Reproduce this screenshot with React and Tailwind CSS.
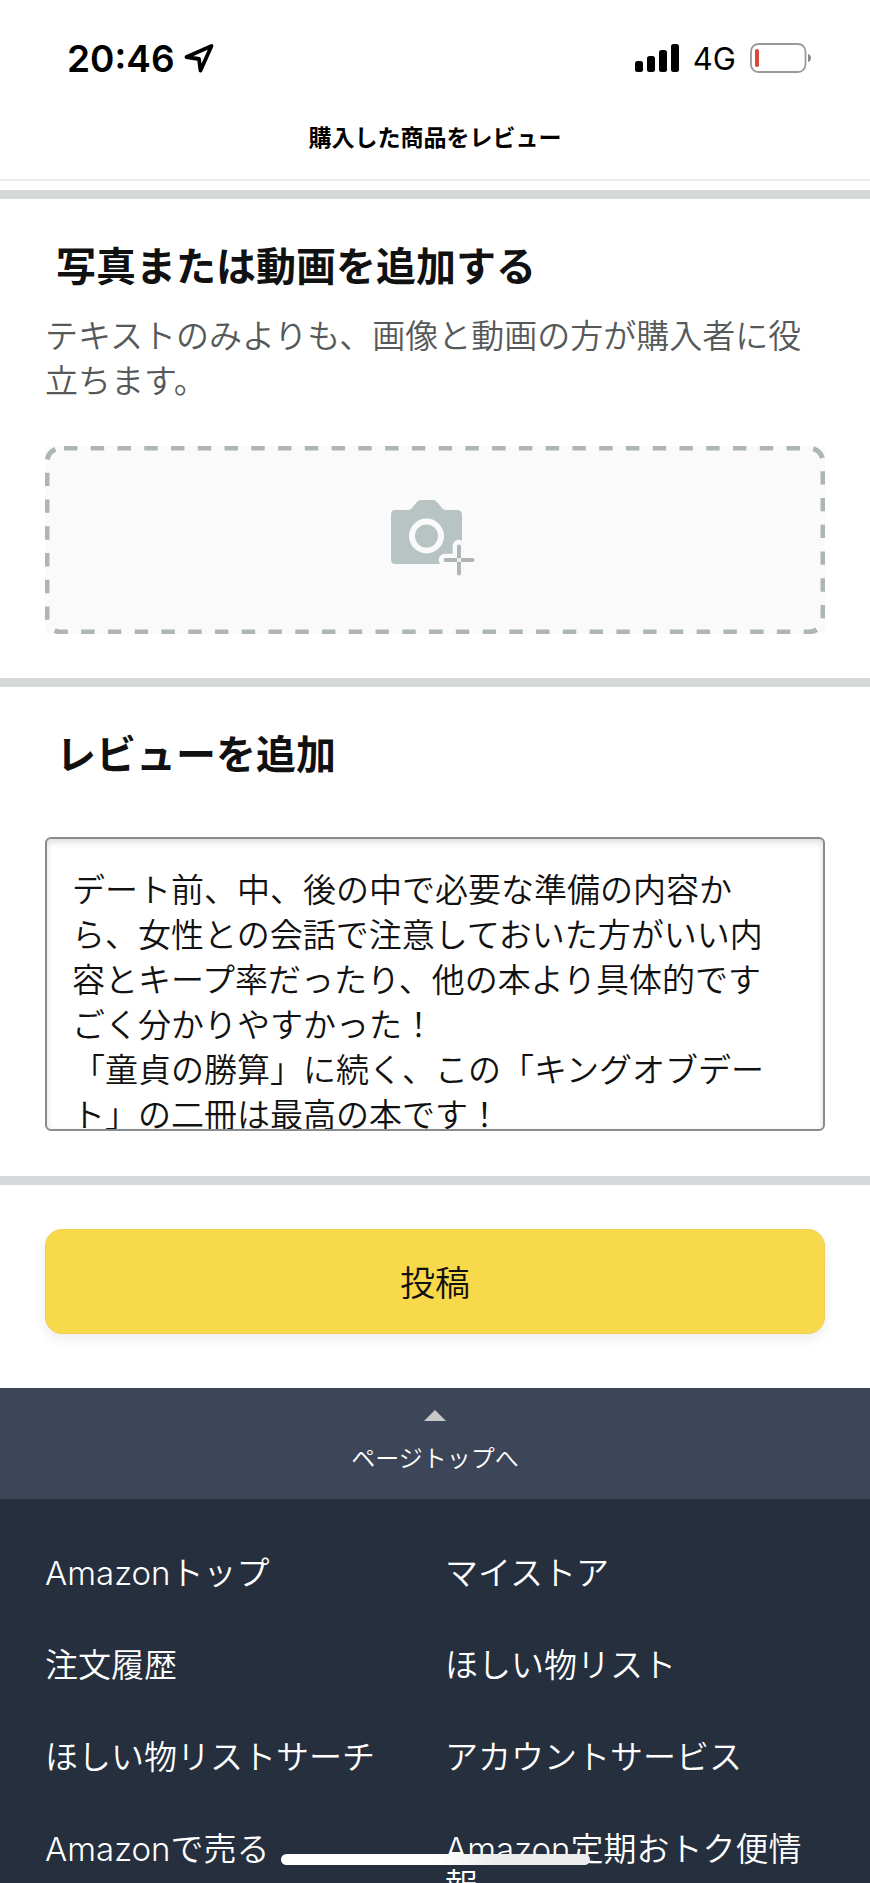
const links = [
  "Amazonトップ",
  "マイストア",
  "注文履歴",
  "ほしい物リスト",
  "ほしい物リストサーチ",
  "アカウントサービス",
  "Amazonで売る",
  "Amazon定期おトク便情報",
];

const review = `デート前、中、後の中で必要な準備の内容から、女性との会話で注意しておいた方がいい内容とキープ率だったり、他の本より具体的ですごく分かりやすかった！
「童貞の勝算」に続く、この「キングオブデート」の二冊は最高の本です！`;

function StatusBar() {
  return (
    <div className="flex h-[116px] items-center justify-between pl-[67px] pr-[58px] text-black">
      <div className="flex items-center gap-2">
        <span className="text-[37px] leading-none font-semibold">20:46</span>
        <svg width="32" height="32" viewBox="0 0 32 32" fill="none" stroke="currentColor" strokeWidth="3.8" strokeLinejoin="round" aria-hidden="true">
          <path d="M3.5 15 L28.5 4 L17.5 28.5 L16 17 Z" />
        </svg>
      </div>
      <div className="flex items-center gap-3.5">
        <svg width="44" height="28" viewBox="0 0 44 28" fill="currentColor" aria-hidden="true">
          <rect x="0" y="17" width="8" height="11" rx="2.5" />
          <rect x="12" y="12" width="8" height="16" rx="2.5" />
          <rect x="24" y="6" width="8" height="22" rx="2.5" />
          <rect x="36" y="0" width="8" height="28" rx="2.5" />
        </svg>
        <span className="text-[31px] leading-none">4G</span>
        <svg width="62" height="30" viewBox="0 0 62 30" aria-hidden="true">
          <rect x="1" y="1" width="54.5" height="28" rx="7.5" fill="none" stroke="#999" strokeWidth="1.8" />
          <rect x="5" y="6" width="4" height="18" rx="1.8" fill="#d84a3e" />
          <path d="M58 11 C62 12 62 18 58 19 Z" fill="#888" />
        </svg>
      </div>
    </div>
  );
}

function CameraPlus() {
  return (
    <svg width="90" height="80" viewBox="0 0 90 80" aria-hidden="true">
      <path
        d="M5 10 H18 C20 10 21 9 22 8 L27 2 C28 1 29 0 31 0 H43 C45 0 46 1 47 2 L52 8 C53 9 54 10 56 10 H67 Q72 10 72 15 V59 Q72 64 67 64 H5 Q1 64 1 59 V15 Q1 10 5 10 Z"
        fill="#b8c4c4"
      />
      <circle cx="36.5" cy="36" r="14.5" fill="none" stroke="#fafafa" strokeWidth="6" />
      <path d="M69 46 V74 M55 60 H83" stroke="#fafafa" strokeWidth="12.5" strokeLinecap="round" />
      <path d="M69 46.5 V73.5 M55.5 60 H82.5" stroke="#adb5b5" strokeWidth="4" strokeLinecap="round" />
      <rect x="67" y="58" width="4" height="4" fill="#eceeee" />
    </svg>
  );
}

export default function App() {
  return (
    <div
      lang="ja"
      className="relative h-screen overflow-hidden bg-white font-['Inter','Noto_Sans_CJK_JP',sans-serif] text-[#111]"
    >
      <header className="mb-[9px] border-b-2 border-[#ebebeb] pb-5">
        <StatusBar />
        <h1 className="pt-px text-center text-[23px] leading-[42px] font-bold text-black">購入した商品をレビュー</h1>
      </header>

      <main>
        {/* 写真・動画 */}
        <section className="border-t-[9px] border-[#d5d9d9] px-[45px] pt-[43px] pb-11">
          <h2 className="px-[11px] text-[40px] leading-[50px] font-bold">写真または動画を追加する</h2>
          <p className="mt-[22px] text-[33px] leading-[45px] font-[350] text-[#565959]">
            テキストのみよりも、画像と動画の方が購入者に役立ちます。
          </p>
          <button
            type="button"
            aria-label="写真または動画を追加する"
            className="relative mt-[42px] flex h-[188px] w-full items-center justify-center bg-[#fafafa]"
          >
            <svg className="absolute inset-0 h-full w-full" fill="none" aria-hidden="true">
              <rect
                x="2"
                y="2"
                rx="14"
                className="h-[calc(100%-4px)] w-[calc(100%-4px)]"
                stroke="#adb5b5"
                strokeWidth="5"
                strokeDasharray="13.4 13.36"
                strokeDashoffset="-3"
              />
            </svg>
            <CameraPlus />
          </button>
        </section>

        {/* レビュー本文 */}
        <section className="border-t-[9px] border-[#d5d9d9] px-[45px] pt-[43px] pb-[45px]">
          <h2 className="px-[11px] text-[40px] leading-[50px] font-bold">
            <label htmlFor="review">レビューを追加</label>
          </h2>
          <textarea
            id="review"
            defaultValue={review}
            className="mt-[57px] block h-[294px] w-full resize-none overflow-hidden rounded-md border-2 border-[#888c8c] pt-[29px] pr-[30px] pl-[25px] text-[33px] leading-[45px] font-[350] shadow-[inset_0_3px_6px_rgba(15,17,17,0.15)]"
          />
        </section>

        <section className="border-t-[9px] border-[#d5d9d9] px-[45px] pt-11 pb-[54px]">
          <button
            type="submit"
            className="h-[105px] w-full rounded-[17px] border border-[#efd050] bg-[#f8d94c] pt-1 text-[35px] font-[350] shadow-[0_5px_12px_rgba(15,17,17,0.08)]"
          >
            投稿
          </button>
        </section>
      </main>

      <footer className="font-[350] text-white">
        <a href="#" className="flex flex-col items-center bg-[#3c4658] pt-[22px] pb-[25px]">
          <svg width="22" height="11" viewBox="0 0 22 11" fill="#c9c9c9" aria-hidden="true">
            <path d="M11 0 L22 11 H0 Z" />
          </svg>
          <span className="mt-[23px] text-2xl leading-[30px]">ページトップへ</span>
        </a>
        <ul className="grid grid-cols-2 gap-x-5 gap-y-14 bg-[#252f3d] px-[45px] pt-14 pb-12 text-[33px] leading-[36px]">
          {links.map((label) => (
            <li key={label}>
              <a href="#">{label}</a>
            </li>
          ))}
        </ul>
      </footer>

      {/* ホームインジケーター */}
      <div className="absolute inset-x-0 bottom-[18px] mx-auto h-[11px] w-[309px] rounded-full bg-linear-to-r from-white from-50% to-[#ececec] to-70%"></div>
    </div>
  );
}
